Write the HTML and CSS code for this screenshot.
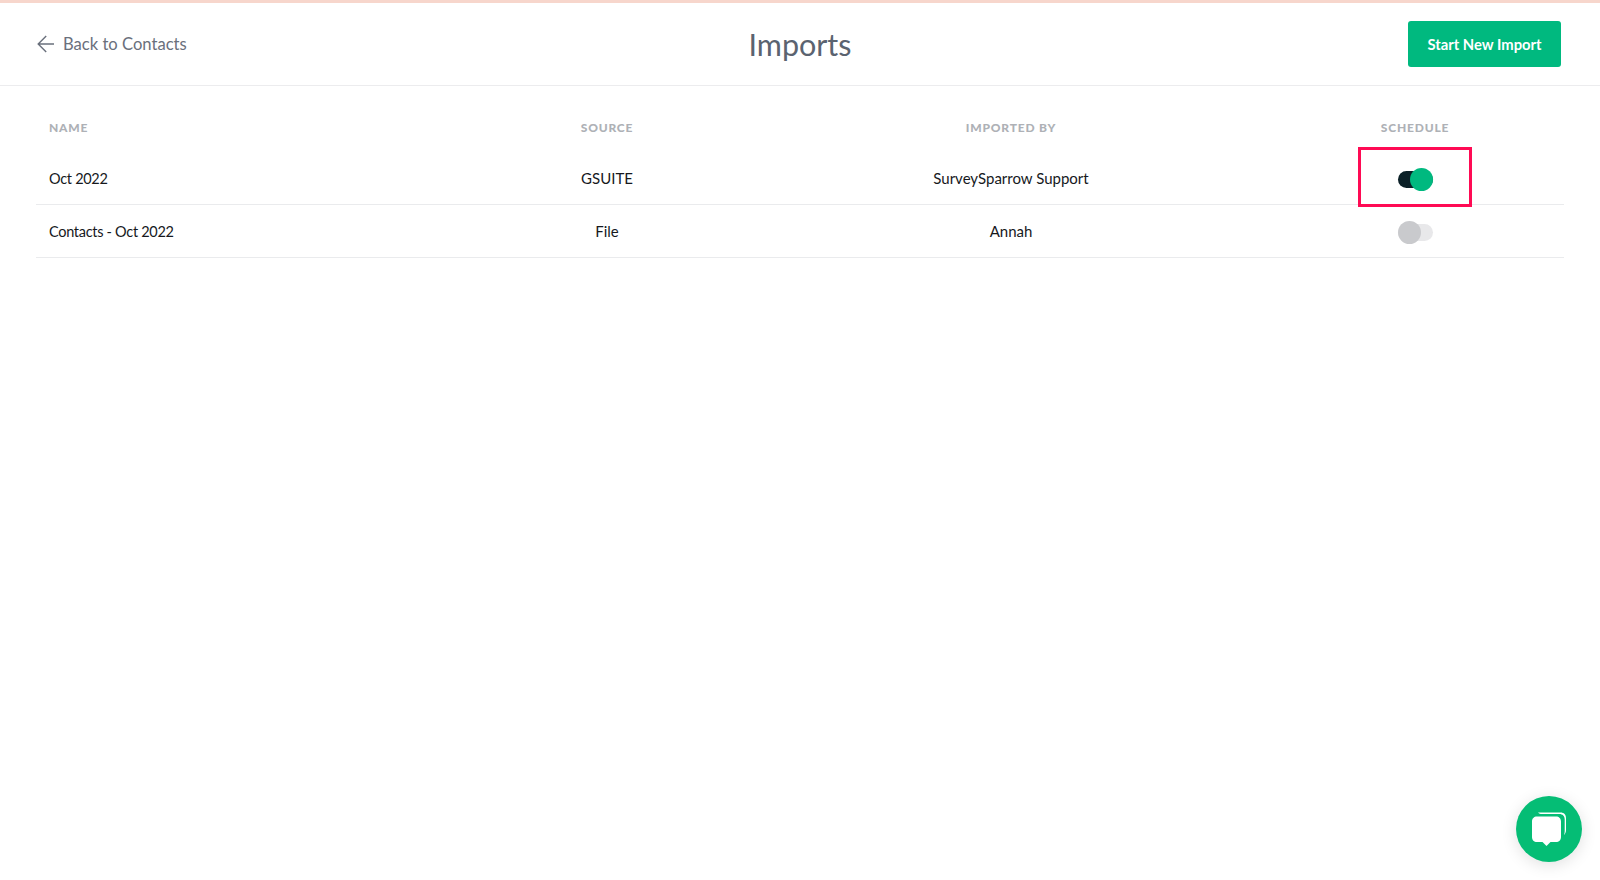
FILE: index.html
```html
<!DOCTYPE html>
<html lang="en">
<head>
<meta charset="utf-8">
<title>Imports</title>
<link rel="stylesheet" href="styles.css">
</head>
<body>
<header class="topbar">
  <a class="back" href="#">
    <svg class="back-icon" width="18" height="18" viewBox="0 0 18 18" fill="none" stroke="currentColor" stroke-width="1.4"><path d="M18 9H2.200M10.200 1l-8 8 8 8"/></svg>
    <span>Back to Contacts</span>
  </a>
  <h1 class="title">Imports</h1>
  <div class="actions"><button class="primary" type="button">Start New Import</button></div>
</header>
<main class="content">
  <div class="row head">
    <div class="cell name">NAME</div>
    <div class="cell">SOURCE</div>
    <div class="cell">IMPORTED BY</div>
    <div class="cell">SCHEDULE</div>
  </div>
  <div class="row item">
    <div class="cell name">Oct 2022</div>
    <div class="cell">GSUITE</div>
    <div class="cell">SurveySparrow Support</div>
    <div class="cell toggle-cell">
      <span class="toggle on"><span class="knob"></span></span>
      <span class="highlight"></span>
    </div>
  </div>
  <div class="row item">
    <div class="cell name">Contacts - Oct 2022</div>
    <div class="cell">File</div>
    <div class="cell">Annah</div>
    <div class="cell toggle-cell">
      <span class="toggle"><span class="knob"></span></span>
    </div>
  </div>
</main>
<button class="chat" type="button" aria-label="Chat">
  <svg width="36" height="36" viewBox="0 0 36 36">
    <path fill="#fff" d="M7 1.500H29.500c3.500 0 5.500 2.200 5.500 5.500V19c0 2.200-.7 3.800-2 5 .5-1.200.7-2.500.7-4V8.500c0-3.300-2-5.500-5.500-5.500H11C9.500 3 8 2.500 7 1.500z"/>
    <path fill="#fff" d="M6 5.500H25c3 0 5 2 5 5v15.500c0 3-2 5-5 5h-5.500L15.500 35l-4-4H6c-3 0-5-2-5-5V10.500c0-3 2-5 5-5z"/>
  </svg>
</button>
</body>
</html>
```
FILE: styles.css
```css
* { box-sizing: border-box; }
html, body { margin: 0; height: 100%; }
body {
  background: #fff;
  color: #16191d;
  font-family: "Lato", "Open Sans", sans-serif;
  overflow: hidden;
}
.topbar {
  height: 86px;
  border-top: 3px solid #f7d6cc;
  border-bottom: 1px solid #ececee;
  padding: 0 39px 0 36px;
  display: grid;
  grid-template-columns: 1fr auto 1fr;
  align-items: center;
}
.back {
  display: flex;
  align-items: center;
  gap: 9px;
  color: #6a707c;
  font-size: 16.600px;
  text-decoration: none;
}
.title {
  margin: 0 0 0 3px;
  font-size: 30.500px;
  font-weight: 400;
  color: #5b6370;
}
.actions { display: flex; justify-content: flex-end; }
.primary {
  width: 153px;
  height: 46px;
  border: 0;
  border-radius: 3px;
  background: #00b97f;
  color: #fff;
  font-family: inherit;
  font-size: 14.800px;
  font-weight: 700;
}
.content { padding: 0 36px; }
.row {
  display: grid;
  grid-template-columns: 422px 298px 510px 298px;
  align-items: center;
}
.head {
  height: 66px;
  padding-top: 16px;
  font-size: 12px;
  font-weight: 900;
  letter-spacing: .8px;
  color: #aeb1b6;
}
.item {
  height: 53px;
  border-bottom: 1px solid #eaebed;
  font-size: 15px;
}
.cell { text-align: center; }
.cell.name {
  text-align: left;
  padding-left: 13px;
}
.item .name {
  font-size: 14.500px;
  letter-spacing: -.3px;
}
.toggle-cell {
  position: relative;
  display: flex;
  justify-content: center;
}
.toggle {
  position: relative;
  width: 35px;
  height: 17px;
  margin-top: 2px;
  border-radius: 9px;
  background: #e8e8ea;
}
.toggle.on { background: #0b2027; }
.knob {
  position: absolute;
  top: -3px;
  left: 0;
  width: 23px;
  height: 23px;
  border-radius: 50%;
  background: #c9cacd;
}
.toggle.on .knob { left: 12px; background: #00b97f; }
.highlight {
  position: absolute;
  left: 92px;
  top: -22px;
  width: 114px;
  height: 60px;
  border: 3.500px solid #ff0a54;
}
.chat {
  position: fixed;
  left: 1516px;
  top: 796px;
  width: 66px;
  height: 66px;
  padding: 0;
  border: 0;
  border-radius: 50%;
  background: #05bd75;
  box-shadow: 0 3px 16px rgba(0, 0, 0, .12);
  display: flex;
  align-items: center;
  justify-content: center;
}
```
